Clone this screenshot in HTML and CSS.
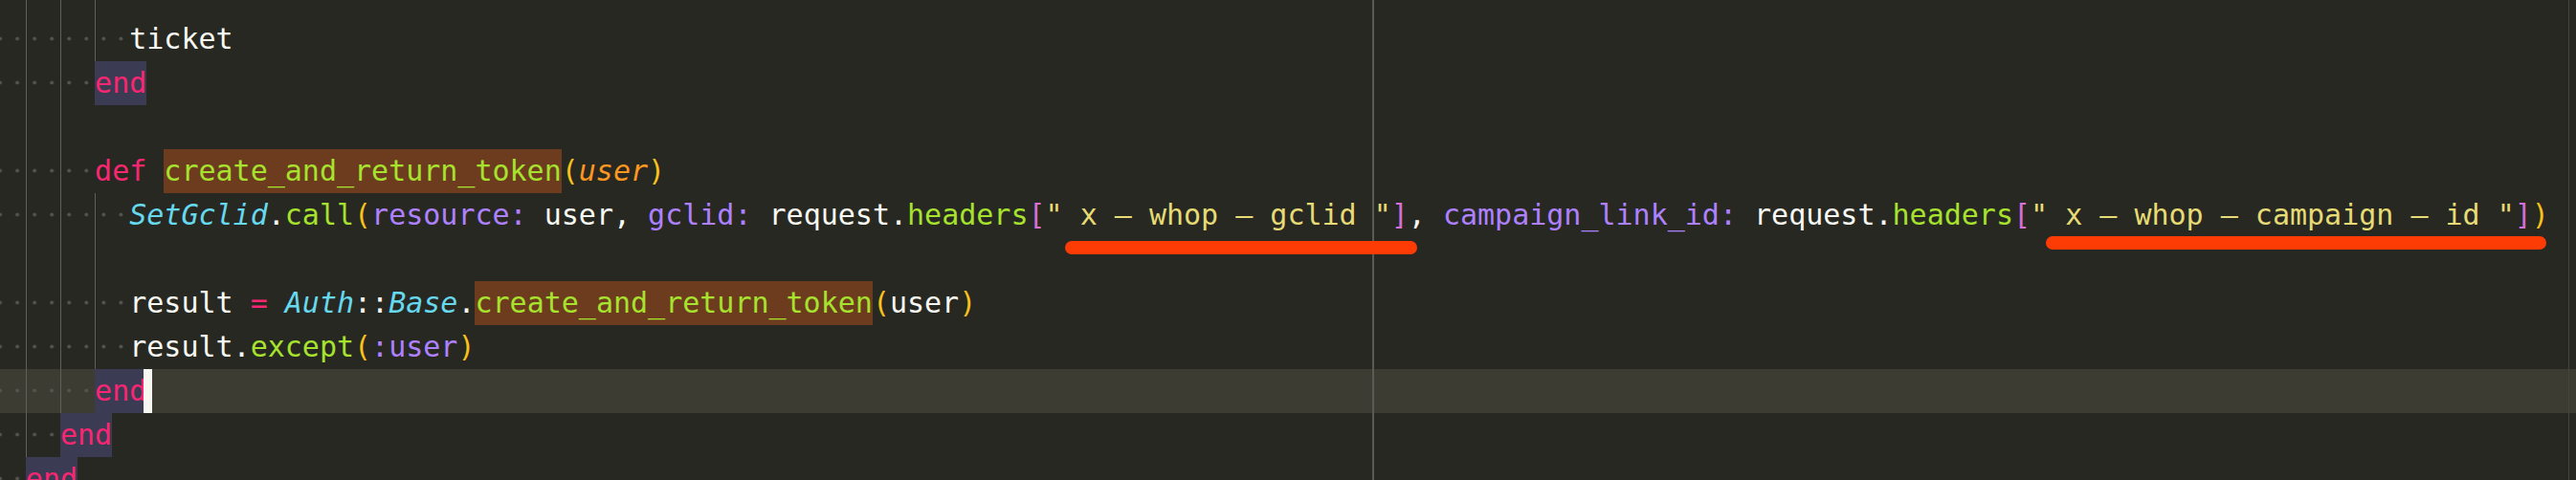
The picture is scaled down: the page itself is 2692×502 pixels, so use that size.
FILE: index.html
```html
<!DOCTYPE html>
<html lang="en">
<head>
<meta charset="utf-8">
<title>editor</title>
<link rel="stylesheet" href="styles.css">
</head>
<body>
<div class="editor">
  <div class="code">
    <div class="ln g2 g4 g6"></div>
    <div class="ln g2 g4 g6"><span class="ws">        </span>ticket</div>
    <div class="ln g2 g4"><span class="ws">      </span><span class="hle k">end</span></div>
    <div class="ln g2 g4"></div>
    <div class="ln g2 g4"><span class="ws">      </span><span class="k">def</span> <span class="hlf f">create_and_return_token</span><span class="b">(</span><span class="p">user</span><span class="b">)</span></div>
    <div class="ln g2 g4 g6"><span class="ws">        </span><span class="c">SetGclid</span>.<span class="f">call</span><span class="b">(</span><span class="s">resource:</span> user, <span class="s">gclid:</span> request.<span class="f">headers</span><span class="br">[</span><span class="q">" x – whop – gclid "</span><span class="br">]</span>, <span class="s">campaign_link_id:</span> request.<span class="f">headers</span><span class="br">[</span><span class="q">" x – whop – campaign – id "</span><span class="br">]</span><span class="b">)</span></div>
    <div class="ln g2 g4 g6"></div>
    <div class="ln g2 g4 g6"><span class="ws">        </span>result <span class="k">=</span> <span class="c">Auth</span>::<span class="c">Base</span>.<span class="hlf f">create_and_return_token</span><span class="b">(</span>user<span class="b">)</span></div>
    <div class="ln g2 g4 g6"><span class="ws">        </span>result.<span class="f">except</span><span class="b">(</span><span class="s">:user</span><span class="b">)</span></div>
    <div class="ln g2 g4 cur"><span class="ws">      </span><span class="hle k">end</span><span class="caret"></span></div>
    <div class="ln g2"><span class="ws">    </span><span class="hle k">end</span></div>
    <div class="ln"><span class="ws">  </span><span class="hle k">end</span></div>
  </div>
  <div class="ruler r80"></div>
  <div class="ruler redge"></div>
  <div class="mark m1"></div>
  <div class="mark m2"></div>
</div>
</body>
</html>
```
FILE: styles.css
```css
html, body {
  margin: 0;
  padding: 0;
  background: #282823;
}

.editor {
  position: relative;
  width: 2692px;
  height: 502px;
  overflow: hidden;
  background: #282823;
}

.code {
  margin: -28px 0 0 -9.3px;
  font-family: "DejaVu Sans Mono", "Liberation Mono", monospace;
  font-size: 30px;
  line-height: 46px;
  color: #f8f8f2;
}

.ln {
  height: 46px;
  white-space: pre;
  --g2: none;
  --g4: none;
  --g6: none;
  background-image: var(--g2), var(--g4), var(--g6);
  background-repeat: no-repeat;
  background-size: 1px 100%;
  background-position: 2ch 0, 4ch 0, 6ch 0;
}

.g2 { --g2: linear-gradient(#606059, #606059); }
.g4 { --g4: linear-gradient(#606059, #606059); }
.g6 { --g6: linear-gradient(#606059, #606059); }

.cur { background-color: #3d3c33; }

.ws {
  background: radial-gradient(circle at 50% 50%, #54544d 0 1.6px, rgba(84, 84, 77, 0) 2.3px) 0 0 / 1ch 100% repeat-x;
}

.k { color: #f92672; }
.f { color: #a6e22e; }
.c { color: #66d9ef; font-style: italic; }
.s { color: #ae81ff; }
.p { color: #fd971f; font-style: italic; }
.b { color: #f8c21b; }
.br { color: #d66fd6; }
.q { color: #e6db74; }

.hle {
  display: inline-block;
  background: #3c3b54;
}

.hlf {
  display: inline-block;
  background: #6d3c1e;
}

.caret {
  display: inline-block;
  width: 9px;
  height: 46px;
  margin-left: -3px;
  vertical-align: top;
  background: #f8f8f2;
}

.ruler {
  position: absolute;
  top: 0;
  bottom: 0;
}

.r80 {
  left: 1434px;
  width: 2px;
  background: #5b5a54;
}

.redge {
  left: 2684px;
  width: 1px;
  background: #45443f;
}

.mark {
  position: absolute;
  height: 14px;
  border-radius: 7px;
  background: #fd3b05;
}

.m1 {
  left: 1113px;
  top: 252px;
  width: 368px;
}

.m2 {
  left: 2138px;
  top: 247px;
  width: 523px;
}
```
